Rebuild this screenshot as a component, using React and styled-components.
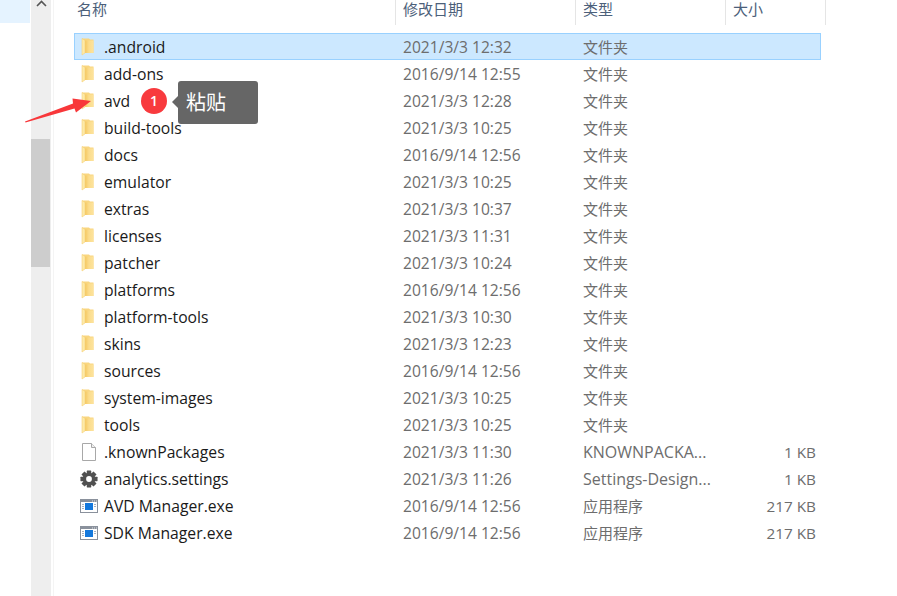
import React from 'react';
import styled, { createGlobalStyle } from 'styled-components';

const GlobalStyle = createGlobalStyle`
    html, body {
        margin: 0;
        padding: 0;
        background: #fff;
    }
    body {
        font-family: "Open Sans", "Noto Sans", "Noto Sans CJK SC", sans-serif;
    }
`

const folders = [
    ['.android', '2021/3/3 12:32'],
    ['add-ons', '2016/9/14 12:55'],
    ['avd', '2021/3/3 12:28'],
    ['build-tools', '2021/3/3 10:25'],
    ['docs', '2016/9/14 12:56'],
    ['emulator', '2021/3/3 10:25'],
    ['extras', '2021/3/3 10:37'],
    ['licenses', '2021/3/3 11:31'],
    ['patcher', '2021/3/3 10:24'],
    ['platforms', '2016/9/14 12:56'],
    ['platform-tools', '2021/3/3 10:30'],
    ['skins', '2021/3/3 12:23'],
    ['sources', '2016/9/14 12:56'],
    ['system-images', '2021/3/3 10:25'],
    ['tools', '2021/3/3 10:25'],
]

const files = [
    { name: '.knownPackages', date: '2021/3/3 11:30', type: 'KNOWNPACKA...', latin: true, size: '1 KB', icon: 'file' },
    { name: 'analytics.settings', date: '2021/3/3 11:26', type: 'Settings-Design...', latin: true, size: '1 KB', icon: 'gear' },
    { name: 'AVD Manager.exe', date: '2016/9/14 12:56', type: '应用程序', size: '217 KB', icon: 'exe' },
    { name: 'SDK Manager.exe', date: '2016/9/14 12:56', type: '应用程序', size: '217 KB', icon: 'exe' },
]

const rows = [
    ...folders.map(([name, date]) => ({ name, date, type: '文件夹', size: '', icon: 'folder' })),
    ...files,
]

const FolderIcon = () => (
    <svg width="18" height="18" viewBox="0 0 18 18">
        <defs>
            <linearGradient id="folderBody" x1="0" x2="1" y1="0" y2="0">
                <stop offset="0" stopColor="#f5c860" />
                <stop offset="0.45" stopColor="#fbdc8c" />
                <stop offset="1" stopColor="#fde39c" />
            </linearGradient>
        </defs>
        <path d="M2 .5h7l1 1h3.5V15H3z" fill="#f9d680" />
        <path d="M5 2.5h8.5V15H5z" fill="url(#folderBody)" />
        <path d="M2 .5l3 2V15l-3 2z" fill="#fdeaa8" />
        <path d="M2 .5l3 2V15l-3 2z" fill="none" stroke="#f6d27a" strokeWidth="0.6" />
    </svg>
)

const FileIcon = () => (
    <svg width="18" height="18" viewBox="0 0 18 18">
        <path d="M2.5.5h9l4 4v13h-13z" fill="#fff" stroke="#a8a8a8" />
        <path d="M11.5.5v4h4" fill="#f0f0f0" stroke="#a8a8a8" />
    </svg>
)

const GearIcon = () => (
    <svg width="18" height="18" viewBox="0 0 20 20">
        <g fill="#505050">
            <rect x="7.5" y="0.5" width="5" height="19" rx="0.5" />
            <rect x="7.5" y="0.5" width="5" height="19" rx="0.5" transform="rotate(45 10 10)" />
            <rect x="7.5" y="0.5" width="5" height="19" rx="0.5" transform="rotate(90 10 10)" />
            <rect x="7.5" y="0.5" width="5" height="19" rx="0.5" transform="rotate(135 10 10)" />
            <circle cx="10" cy="10" r="7" />
        </g>
        <circle cx="10" cy="10" r="3.2" fill="#fff" />
    </svg>
)

const ExeIcon = () => (
    <svg width="18" height="14" viewBox="0 0 18 14">
        <rect x="0.5" y="0.5" width="17" height="13" fill="#fff" stroke="#8a919c" />
        <rect x="1" y="1" width="16" height="2" fill="#8a919c" />
        <path d="M12 2h1M14 2h1M16 2h1" stroke="#dfe3e8" />
        <rect x="5" y="4" width="8" height="7" fill="#1478dc" />
        <path d="M2 5.5h2M2 7.5h2M2 9.5h2M14 5.5h2M14 7.5h2" stroke="#a9b3bf" />
    </svg>
)

const icons = { folder: FolderIcon, file: FileIcon, gear: GearIcon, exe: ExeIcon }

const Row = ({ row, selected }) => {
    const Icon = icons[row.icon]
    return (
        <RowWrap selected={selected}>
            <NameCell>
                <IconSlot><Icon /></IconSlot>
                <span>{row.name}</span>
            </NameCell>
            <DateCell>{row.date}</DateCell>
            <TypeCell latin={row.latin}>{row.type}</TypeCell>
            <SizeCell>{row.size}</SizeCell>
        </RowWrap>
    )
}

const App = () => {
    return (
        <Page>
            <GlobalStyle />
            <Sidebar><SidebarActive /></Sidebar>
            <Scrollbar>
                <ScrollUp>
                    <svg width="11" height="7" viewBox="0 0 11 7">
                        <path d="M1 6l4.5-4.5L10 6" fill="none" stroke="#555" strokeWidth="1.6" />
                    </svg>
                </ScrollUp>
                <ScrollThumb />
            </Scrollbar>
            <Main>
                <Header>
                    <HeadName>名称</HeadName>
                    <HeadCell width={180}>修改日期</HeadCell>
                    <HeadCell width={150}>类型</HeadCell>
                    <HeadCell width={100}>大小</HeadCell>
                </Header>
                <List>
                    {rows.map((row, i) => (
                        <Row key={row.name} row={row} selected={i === 0} />
                    ))}
                </List>
            </Main>
            <Arrow width="72" height="34" viewBox="0 0 72 34">
                <path d="M1 31.5L49 13.5 48.5 8.5 67 11 52 22.5 50.5 18.5 1.5 32.5z" fill="#f8373a" />
            </Arrow>
            <Badge>1</Badge>
            <Tip>粘贴</Tip>
        </Page>
    )
}

const Page = styled.div`
    position: relative;
    display: flex;
    width: 897px;
    height: 596px;
    overflow: hidden;
    background: #fff;
`

const Sidebar = styled.div`
    width: 31px;
    flex-shrink: 0;
`

const SidebarActive = styled.div`
    width: 30px;
    height: 23px;
    background: #e5f3ff;
`

const Scrollbar = styled.div`
    width: 20px;
    flex-shrink: 0;
    background: #eeeeee;
    box-shadow: 2px 0 0 #fff, 3px 0 0 #f4f4f4;
    display: flex;
    flex-direction: column;
`

const ScrollUp = styled.div`
    height: 139px;
    display: flex;
    justify-content: center;
    align-items: flex-start;
`

const ScrollThumb = styled.div`
    height: 128px;
    width: 19px;
    background: #cdcdcd;
`

const Main = styled.div`
    flex: 1;
    padding-left: 23px;
    min-width: 0;
`

const Header = styled.div`
    display: flex;
    height: 25px;
    color: #4c607a;
    font-size: 15px;
    line-height: 18px;
`

const HeadName = styled.div`
    width: 322px;
    padding-left: 3px;
    box-sizing: border-box;
    border-right: 1px solid #e5e5e5;
`

const HeadCell = styled.div`
    width: ${({ width }) => width}px;
    padding-left: 7px;
    box-sizing: border-box;
    border-right: 1px solid #e5e5e5;
`

const List = styled.div`
    margin-top: 8px;
    width: 747px;
`

const RowWrap = styled.div`
    display: flex;
    align-items: center;
    box-sizing: border-box;
    height: 27px;
    background: ${({ selected }) => (selected ? '#cce8ff' : 'transparent')};
    border: 1px solid ${({ selected }) => (selected ? '#99d1ff' : 'transparent')};
`

const NameCell = styled.div`
    width: 320px;
    display: flex;
    align-items: center;
    color: #1a1a1a;
    font-size: 15.7px;
    white-space: nowrap;
`

const IconSlot = styled.div`
    width: 29px;
    padding-left: 5px;
    box-sizing: border-box;
    display: flex;
    align-items: center;
    flex-shrink: 0;
`

const DateCell = styled.div`
    width: 180px;
    padding-left: 8px;
    box-sizing: border-box;
    color: #6d6d6d;
    font-size: 15.6px;
`

const TypeCell = styled.div`
    width: 150px;
    padding-left: 8px;
    box-sizing: border-box;
    color: #6d6d6d;
    font-size: ${({ latin }) => (latin ? '16px' : '15px')};
    white-space: nowrap;
`

const SizeCell = styled.div`
    width: 91px;
    text-align: right;
    color: #6d6d6d;
    font-size: 15.3px;
`

const Arrow = styled.svg`
    position: absolute;
    left: 24px;
    top: 90px;
`

const Badge = styled.div`
    position: absolute;
    left: 141px;
    top: 88px;
    width: 26px;
    height: 26px;
    border-radius: 50%;
    background: #f83a3e;
    color: #fff;
    font-size: 14px;
    font-weight: 600;
    line-height: 26px;
    text-align: center;
`

const Tip = styled.div`
    position: absolute;
    left: 178px;
    top: 81px;
    width: 80px;
    height: 43px;
    box-sizing: border-box;
    padding-left: 8px;
    border-radius: 3px;
    background: #666666;
    color: #fff;
    font-size: 20px;
    line-height: 43px;

    &::before {
        content: '';
        position: absolute;
        left: -6px;
        top: 15px;
        border-style: solid;
        border-width: 6px 6px 6px 0;
        border-color: transparent #666666 transparent transparent;
    }
`

export default App;
